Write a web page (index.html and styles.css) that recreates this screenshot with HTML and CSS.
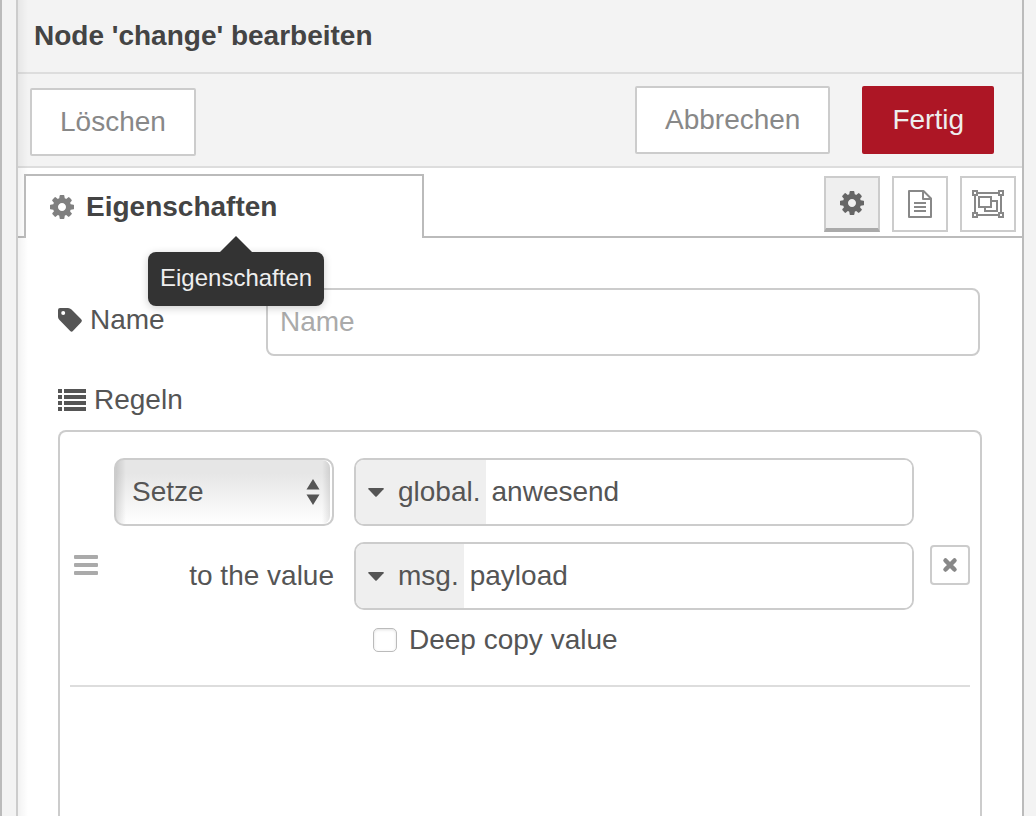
FILE: index.html
```html
<!DOCTYPE html>
<html lang="de">
<head>
<meta charset="utf-8">
<title>Node 'change' bearbeiten</title>
<link rel="stylesheet" href="styles.css">
</head>
<body>
<svg class="sprite" aria-hidden="true">
  <symbol id="cog" viewBox="128 128 1536 1536"><path fill="currentColor" d="M1152 896q0-106-75-181t-181-75-181 75-75 181 75 181 181 75 181-75 75-181zm512-109v222q0 12-8 23t-20 13l-185 28q-19 54-39 91 35 50 107 138 10 12 10 25t-9 23q-27 37-99 108t-94 71q-12 0-26-9l-138-108q-44 23-91 38-16 136-29 186-7 28-36 28h-222q-14 0-24.500-8.500t-11.500-21.500l-28-184q-49-16-90-37l-141 107q-10 9-25 9-14 0-25-11-126-114-165-168-7-10-7-23 0-12 8-23 15-21 51-66.500t54-70.500q-27-50-41-99l-183-27q-13-2-21-12.500t-8-23.500v-222q0-12 8-23t19-13l186-28q14-46 39-92-40-57-107-138-10-12-10-24 0-10 9-23 26-36 98.500-107.500t94.500-71.500q13 0 26 10l138 107q44-23 91-38 16-136 29-186 7-28 36-28h222q14 0 24.500 8.500t11.500 21.500l28 184q49 16 90 37l142-107q9-9 24-9 13 0 25 10 129 119 165 170 7 8 7 22 0 12-8 23-15 21-51 66.500t-54 70.500q26 50 41 98l183 28q13 2 21 12.500t8 23.500z"/></symbol>
</svg>
<div class="workspace">
  <main class="tray">
    <header class="tray-header"><h1 class="tray-title">Node 'change' bearbeiten</h1></header>
    <div class="toolbar">
      <button class="btn btn-delete" type="button">Löschen</button>
      <div class="toolbar-right">
        <button class="btn" type="button">Abbrechen</button>
        <button class="btn btn-primary" type="button">Fertig</button>
      </div>
    </div>
    <nav class="tabs">
      <div class="tab-lead"></div>
      <button class="tab" type="button">
        <svg class="tab-icon" width="24" height="24" aria-hidden="true"><use href="#cog"/></svg>
        <span>Eigenschaften</span>
        <span class="tooltip" role="tooltip">Eigenschaften</span>
      </button>
      <div class="tab-actions">
        <button class="icon-btn icon-btn-active" type="button" aria-label="Eigenschaften">
          <svg width="24" height="24"><use href="#cog"/></svg>
        </button>
        <button class="icon-btn" type="button" aria-label="Beschreibung">
          <svg width="24" height="28" viewBox="0 0 24 28" fill="none" stroke="currentColor" stroke-width="2" stroke-linejoin="round"><path d="M1 1h14.500L23 8.500V27H1zM15 1v8h8M6 13h12M6 17h12M6 21h12"/></svg>
        </button>
        <button class="icon-btn" type="button" aria-label="Darstellung">
          <svg width="32" height="28" viewBox="0 0 32 28" fill="none" stroke="currentColor" stroke-width="2"><path d="M6 3h20M6 25h20M3 6v16M29 6v16M7 7h12v10H7zM19 11h6v10H13v-4M1 1h4v4H1zM27 1h4v4h-4zM1 23h4v4H1zM27 23h4v4h-4z"/></svg>
        </button>
      </div>
    </nav>
    <form class="editor">
      <div class="name-row">
        <label class="label" for="name">
          <svg width="24" height="24" viewBox="0 0 24 24" aria-hidden="true"><path fill="currentColor" fill-rule="evenodd" d="M2 0h8q2 0 3.500 1.500l9.700 9.700q1.500 1.500 0 3l-8.300 8.900q-1.300 1.300-2.700 0L1.500 12Q0 10.500 0 9V2Q0 0 2 0zM5.200 3a2 2 0 1 0 0 4 2 2 0 0 0 0-4z"/></svg>
          <span>Name</span>
        </label>
        <input class="name-input" id="name" type="text" placeholder="Name">
      </div>
      <div class="label rules-label">
        <svg width="28" height="22" viewBox="0 0 28 22" fill="currentColor" aria-hidden="true"><path d="M0 0h4v4H0zM0 6h4v4H0zM0 12h4v4H0zM0 18h4v4H0zM6 0h22v4H6zM6 6h22v4H6zM6 12h22v4H6zM6 18h22v4H6z"/></svg>
        <span>Regeln</span>
      </div>
      <div class="rules">
        <div class="rule">
          <svg class="handle" width="24" height="20" viewBox="0 0 24 20" fill="currentColor" aria-hidden="true"><rect width="24" height="4" rx="1"/><rect y="8" width="24" height="4" rx="1"/><rect y="16" width="24" height="4" rx="1"/></svg>
          <div class="rule-grid">
            <div class="select-wrap">
              <select class="select" aria-label="Aktion"><option>Setze</option></select>
              <svg class="select-arrows" width="12" height="26" viewBox="0 0 12 26" fill="currentColor" aria-hidden="true"><path d="M6 0l6.500 10.500h-13zM6 26l6.500-10.500h-13z"/></svg>
            </div>
            <div class="typed">
              <button class="type-btn" type="button"><svg width="16" height="9" viewBox="0 0 16 9" aria-hidden="true"><path fill="currentColor" d="M1 0h14q1.500 0 .5 1.200L8.700 8.500q-.7.700-1.400 0L.5 1.200Q-.5 0 1 0z"/></svg><span>global.</span></button>
              <input class="typed-input" type="text" value="anwesend" aria-label="Eigenschaft">
            </div>
            <label class="to-label" for="target">to the value</label>
            <div class="typed">
              <button class="type-btn" type="button"><svg width="16" height="9" viewBox="0 0 16 9" aria-hidden="true"><path fill="currentColor" d="M1 0h14q1.500 0 .5 1.200L8.700 8.500q-.7.700-1.400 0L.5 1.200Q-.5 0 1 0z"/></svg><span>msg.</span></button>
              <input class="typed-input" id="target" type="text" value="payload">
            </div>
            <label class="deep"><input class="check" type="checkbox"><span>Deep copy value</span></label>
          </div>
          <button class="remove" type="button" aria-label="Regel entfernen">
            <svg width="14" height="14" viewBox="0 0 14 14" stroke="currentColor" stroke-width="4.500" stroke-linecap="round"><path d="M2.500 2.500l9 9M11.500 2.500l-9 9"/></svg>
          </button>
        </div>
      </div>
    </form>
  </main>
</div>
</body>
</html>
```
FILE: styles.css
```css
* { box-sizing: border-box; }

body {
  margin: 0;
  color: #555;
  background: #f3f3f3;
  font: 28px/36px "Helvetica Neue", Helvetica, "Liberation Sans", Arial, sans-serif;
}

button, input, select { font: inherit; color: inherit; margin: 0; }
svg { flex: none; overflow: visible; }
.sprite { position: absolute; width: 0; height: 0; }

.workspace {
  height: 100vh;
  padding: 0 12px 0 14px;
  border-left: 2px solid #bbb;
  overflow: hidden;
}

.tray {
  position: relative;
  display: flex;
  flex-direction: column;
  height: 100%;
  background: #fff;
  border-left: 2px solid #ccc;
  border-right: 2px solid #bbb;
}

.tray::before {
  content: "";
  position: absolute;
  inset: 0 auto 0 0;
  width: 10px;
  background: linear-gradient(to right, rgba(0, 0, 0, .05), rgba(0, 0, 0, 0));
  pointer-events: none;
}

.tray-header {
  padding: 18px 16px;
  background: #f3f3f3;
  border-bottom: 2px solid #ddd;
}

.tray-title { margin: 0; font-size: 28px; line-height: 36px; color: #444; }

.toolbar {
  display: flex;
  justify-content: space-between;
  padding: 12px 28px 12px 12px;
  background: #f3f3f3;
  border-bottom: 2px solid #ddd;
}

.toolbar-right { display: flex; gap: 32px; }

.btn {
  height: 68px;
  padding: 0 28px;
  color: #888;
  background: #fff;
  border: 2px solid #ccc;
  border-radius: 2px;
}

.btn-delete { margin-top: 2px; margin-bottom: -2px; }
.btn-primary { color: #eee; background: #ad1625; border-color: #ad1625; }

.tabs { display: flex; height: 70px; padding-top: 6px; }
.tab-lead { width: 6px; border-bottom: 2px solid #bbb; }

.tab {
  position: relative;
  display: flex;
  flex: 0 1 400px;
  align-items: center;
  gap: 12px;
  padding: 0 24px;
  font-weight: bold;
  color: #444;
  background: #fff;
  border: 2px solid #bbb;
  border-bottom: 0;
}

.tab-icon { color: #808080; }

.tab-actions {
  display: flex;
  flex: 1;
  justify-content: flex-end;
  gap: 12px;
  padding: 2px 6px 0 0;
  border-bottom: 2px solid #bbb;
}

.icon-btn {
  display: flex;
  align-items: center;
  justify-content: center;
  width: 56px;
  height: 56px;
  padding: 0;
  color: #888;
  background: #fff;
  border: 2px solid #ccc;
}

.icon-btn-active { color: #666; background: #efefef; border-bottom: 4px solid #aaa; }

.tooltip {
  position: absolute;
  z-index: 2;
  top: 76px;
  left: 122px;
  padding: 8px 12px 10px;
  font-size: 24px;
  font-weight: normal;
  color: #eee;
  background: #333;
  border-radius: 8px;
  box-shadow: 0 2px 8px rgba(0, 0, 0, .2);
}

.tooltip::before {
  content: "";
  position: absolute;
  bottom: 100%;
  left: 50%;
  margin-left: -16px;
  border: 16px solid transparent;
  border-top: 0;
  border-bottom-color: #333;
}

.editor {
  display: flex;
  flex: 1;
  flex-direction: column;
  padding: 50px 40px 0;
}

.name-row { display: flex; align-items: center; margin-right: 2px; }
.label { display: flex; align-items: center; gap: 8px; }
.name-row .label { width: 208px; margin-bottom: 4px; }

.name-input {
  flex: 1;
  min-width: 0;
  height: 68px;
  padding: 0 12px;
  background: #fff;
  border: 2px solid #ccc;
  border-radius: 8px;
}

.name-input::placeholder { color: #aaa; }
.rules-label { padding: 26px 0 12px; }

.rules {
  flex: 1;
  padding: 10px;
  border: 2px solid #ccc;
  border-bottom: 0;
  border-radius: 8px 8px 0 0;
}

.rule {
  display: flex;
  align-items: center;
  gap: 16px;
  padding: 16px 0 13px 4px;
  border-bottom: 2px solid #ddd;
}

.handle { color: #aaa; }

.rule-grid {
  display: grid;
  flex: 1;
  grid-template-columns: 220px minmax(0, 1fr);
  gap: 16px 20px;
  align-items: center;
}

.select-wrap { position: relative; }

.select {
  display: block;
  width: 100%;
  height: 68px;
  padding: 0 36px 0 16px;
  appearance: none;
  background:
    linear-gradient(to right, rgba(0, 0, 0, .12), rgba(0, 0, 0, 0) 10px, rgba(0, 0, 0, 0) calc(100% - 10px), rgba(0, 0, 0, .12)),
    linear-gradient(#e6e6e6 20%, #fff);
  border: 2px solid #ccc;
  border-radius: 10px;
  box-shadow: inset -2px 0 0 #fff;
}

.select-arrows { position: absolute; top: 21px; right: 15px; pointer-events: none; }

.typed {
  display: flex;
  height: 68px;
  overflow: hidden;
  border: 2px solid #ccc;
  border-radius: 10px;
}

.type-btn {
  display: flex;
  align-items: center;
  gap: 14px;
  padding: 0 5px 0 12px;
  background: #efefef;
  border: 0;
}

.typed-input {
  flex: 1;
  min-width: 0;
  padding: 0 6px;
  background: #fff;
  border: 0;
}

.to-label { text-align: right; }

.deep {
  display: flex;
  grid-column: 2;
  align-items: center;
  gap: 12px;
  margin-top: -4px;
  padding: 0 0 14px 19px;
}

.check {
  width: 24px;
  height: 24px;
  appearance: none;
  background: #fff;
  border: 1px solid #bbb;
  border-radius: 5px;
  box-shadow: inset 0 1px 3px rgba(0, 0, 0, .12);
}

.remove {
  display: flex;
  align-items: center;
  justify-content: center;
  width: 40px;
  height: 40px;
  padding: 0;
  color: #888;
  background: #fff;
  border: 2px solid #ccc;
  border-radius: 4px;
}
```
